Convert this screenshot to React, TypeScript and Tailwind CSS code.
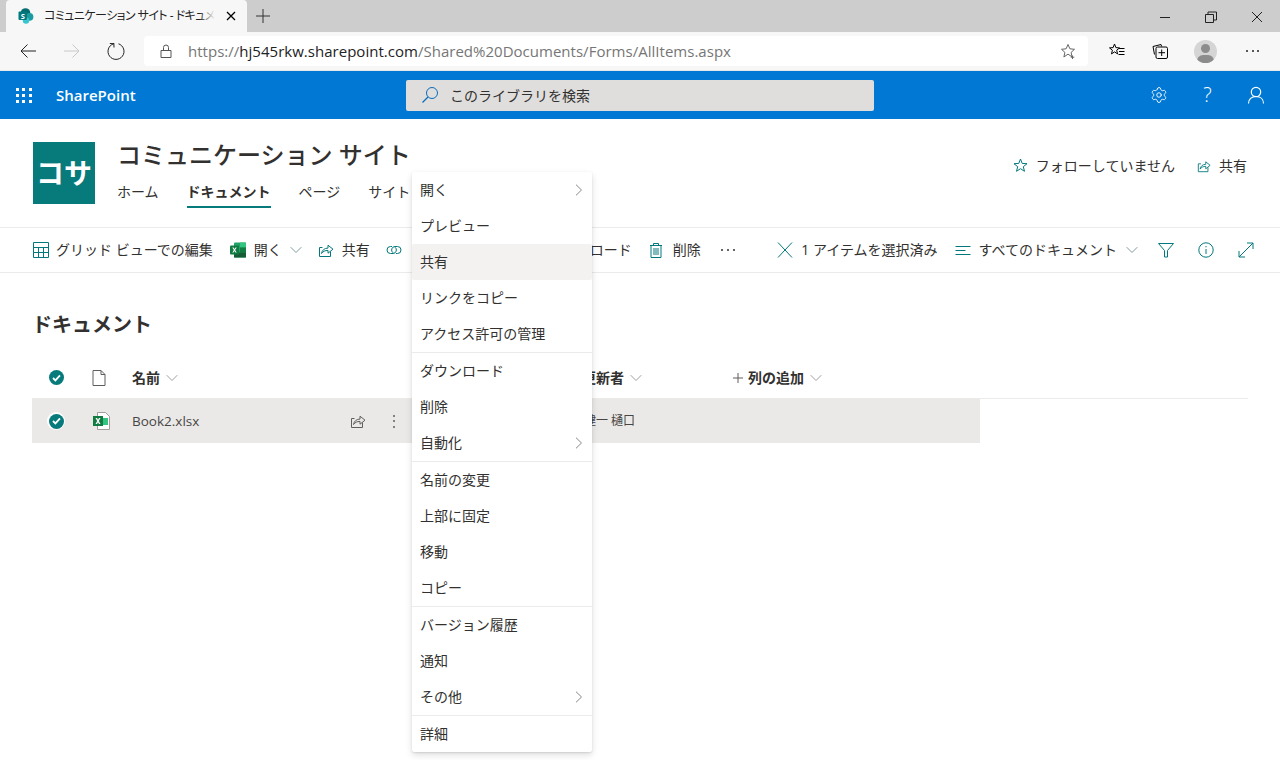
import React from "react";
import { Settings } from "lucide-react";

type IP = { size?: number; className?: string; children?: React.ReactNode; vb?: number };
const I = ({ size = 16, className = "", children, vb }: IP) => (
  <svg width={size} height={size} viewBox={`0 0 ${vb ?? size} ${vb ?? size}`} fill="none" stroke="currentColor" strokeWidth={1} className={`shrink-0 ${className}`}>
    {children}
  </svg>
);

const Chevron = ({ className = "text-[#8a8886]", w = 12 }: { className?: string; w?: number }) => (
  <svg width={w} height={8} viewBox="0 0 12 8" fill="none" stroke="currentColor" className={`shrink-0 ${className}`}><path d="M.7 1.2 6 6.500l5.300-5.300" /></svg>
);

const ShareIcon = ({ className = "text-[#03787c]", size = 16 }: { className?: string; size?: number }) => (
  <I size={size} vb={16} className={className}>
    <path d="M4.500 5.500H1.500v9h11V9.500M3.500 11.500c.6-3.400 3-5.400 6.500-5.400V3.200l5 4-5 4V8.400c-2.800 0-5 1-6.500 3.100Z" />
  </I>
);

const ExcelSmall = () => (
  <svg width={16} height={16} viewBox="0 0 16 16" className="shrink-0">
    <rect x="4" y="0.5" width="12" height="15" rx="1" fill="#21a366" />
    <rect x="10" y="0.5" width="6" height="5" fill="#33c481" />
    <rect x="10" y="5.5" width="6" height="5" fill="#107c41" />
    <rect x="4" y="10.5" width="12" height="5" fill="#185c37" />
    <rect x="0" y="3.5" width="9" height="9" rx="1" fill="#107c41" />
    <path d="M2.300 5.400h1.200l1 1.600 1-1.600h1.200L5.100 8l1.600 2.600H5.500l-1-1.700-1 1.700H2.300L3.900 8Z" fill="#fff" />
  </svg>
);

const CheckCircle = ({ halo }: { halo?: boolean }) => (
  <span className={`flex h-[18px] w-[18px] items-center justify-center rounded-full ${halo ? "bg-white" : ""}`}>
    <span className="flex h-[15px] w-[15px] items-center justify-center rounded-full bg-[#077a7c]">
      <svg width={9} height={8} viewBox="0 0 9 8" fill="none" stroke="#fff" strokeWidth={1.8}><path d="M1 4l2.400 2.400L8 1.400" /></svg>
    </span>
  </span>
);

const TbBtn = ({ icon, label, className = "" }: { icon: React.ReactNode; label: string; className?: string }) => (
  <div className={`flex items-center gap-2 ${className}`}>
    {icon}
    <span className="whitespace-nowrap pb-[2px]">{label}</span>
  </div>
);

const menu: { label: string; sub?: boolean; hl?: boolean }[][] = [
  [{ label: "開く", sub: true }, { label: "プレビュー" }, { label: "共有", hl: true }, { label: "リンクをコピー" }, { label: "アクセス許可の管理" }],
  [{ label: "ダウンロード" }, { label: "削除" }, { label: "自動化", sub: true }],
  [{ label: "名前の変更" }, { label: "上部に固定" }, { label: "移動" }, { label: "コピー" }],
  [{ label: "バージョン履歴" }, { label: "通知" }, { label: "その他", sub: true }],
  [{ label: "詳細" }],
];

export default function App() {
  return (
    <div className="relative h-[760px] w-[1280px] overflow-hidden bg-white font-['Open_Sans','Noto_Sans_CJK_JP',sans-serif] text-[14px] text-[#323130]">
      {/* tab strip */}
      <div className="flex h-8 items-end bg-[#cdcdcd] pl-[6px]">
        <div className="flex h-8 w-[241px] items-center rounded-t-[4px] bg-[#f7f7f7] pl-3 pr-[11px]">
          <svg width={16} height={16} viewBox="0 0 16 16" className="shrink-0">
            <circle cx="7.5" cy="5" r="4.8" fill="#036c70" />
            <circle cx="11.5" cy="8.8" r="3.9" fill="#1a9ba1" />
            <circle cx="8" cy="12.5" r="3.2" fill="#37c6d0" />
            <rect x="0.5" y="3.6" width="8.4" height="8.4" rx="1" fill="#03787c" />
            <text x="4.7" y="10.6" textAnchor="middle" fontSize="7.5" fontWeight="700" fill="#fff">S</text>
          </svg>
          <div className="relative ml-[10px] w-[171px] overflow-hidden whitespace-nowrap text-[12px] tracking-[-0.55px] text-[#222] [font-feature-settings:'palt']">
            コミュニケーション サイト - ドキュメント -
            <span className="absolute inset-y-0 right-0 w-4 bg-gradient-to-r from-transparent to-[#f7f7f7]" />
          </div>
          <I size={10} className="ml-auto text-black"><path d="M1 1l8 8M9 1l-8 8" strokeWidth={1.3} /></I>
        </div>
        <I size={14} className="mb-[9px] ml-[9px] text-[#333]"><path d="M7 0v14M0 7h14" /></I>
        <div className="mb-[9px] ml-auto flex items-center gap-[34px] pr-[17px] text-[#222]">
          <I size={12}><path d="M1 6.500h10" /></I>
          <I size={12}><path d="M.5 3.500h8v8h-8zM3 3.500V1h8.500v8H8.500" /></I>
          <I size={12}><path d="M1 1l10 10M11 1 1 11" /></I>
        </div>
      </div>

      {/* address row */}
      <div className="flex h-[39px] items-center border-b border-[#e8e8e8] bg-[#f7f7f7] pl-5">
        <I size={16} className="text-[#222]"><path d="M16 8H1M7.500 1.500 1 8l6.500 6.500" /></I>
        <I size={16} className="ml-7 text-[#c8c8c8]"><path d="M0 8h15M8.500 1.500 15 8l-6.500 6.500" /></I>
        <I size={18} vb={18} className="ml-[27px] text-[#222]"><path d="M6.500 1.800a8 8 0 1 0 5 0M6.800 1l.2 4.500M2.800 1.500 7 1.700" /></I>
        <div className="ml-[19px] flex h-[30px] w-[944px] items-center rounded-[4px] bg-white pl-[15px] pr-[12px]">
          <I size={14} className="text-[#555]"><path d="M2 6.500h10v7H2zM4.500 6.500V3.500a2.500 2.500 0 0 1 5 0v3" /></I>
          <span className="ml-[15px] whitespace-nowrap text-[15px] tracking-[0.02px] text-[#767676]">https://<span className="text-[#222]">hj545rkw.sharepoint.com</span>/Shared%20Documents/Forms/AllItems.aspx</span>
          <I size={16} className="ml-auto text-[#666]"><path d="M8 1.500l1.900 4.300 4.600.5-3.400 3.100 1 4.600L8 11.100l-4.100 2.900 1-4.600L1.500 6.300l4.600-.5Z" /><path d="M12.500 12.500v3.500M10.800 14.200h3.500" /></I>
        </div>
        <I size={18} vb={18} className="ml-5 text-black"><path d="M6.500 2l1.400 3.600 3.600.3-2.800 2.300.9 3.700-3.100-2-3 2 .9-3.700L1.500 5.900l3.600-.3Z" /><path d="M11 6.500h5.500M11 9.500h5.500M10.500 12.500h6" /></I>
        <I size={18} vb={18} className="ml-[25px] text-black"><path d="M3.500 12.500 2 4.500 10 2.500l.7 2" /><rect x="5" y="5" width="11.500" height="11.500" rx="1.500" /><path d="M10.700 7.500v6.500M7.500 10.700h6.500" /></I>
        <div className="relative ml-[25px] h-[23px] w-[23px] overflow-hidden rounded-full bg-[#d5d5d5]">
          <span className="absolute left-[7px] top-[4px] h-[9px] w-[9px] rounded-full bg-[#8c8c8c]" />
          <span className="absolute left-[3px] top-[15px] h-[12px] w-[17px] rounded-full bg-[#8c8c8c]" />
        </div>
        <div className="ml-[29px] flex gap-[3.500px]">
          <span className="h-[2px] w-[2px] rounded-full bg-[#222]" />
          <span className="h-[2px] w-[2px] rounded-full bg-[#222]" />
          <span className="h-[2px] w-[2px] rounded-full bg-[#222]" />
        </div>
      </div>

      {/* suite bar */}
      <div className="flex h-12 items-center bg-[#0078d4] pl-4 pr-[15px] text-white">
        <div className="grid w-4 grid-cols-3 gap-[3px]">
          {Array.from({ length: 9 }).map((_, i) => <span key={i} className="h-[3px] w-[3px] bg-white" />)}
        </div>
        <span className="ml-6 w-[350px] text-[15px] font-semibold">SharePoint</span>
        <div className="flex h-[31px] w-[468px] items-center rounded-[2px] bg-[#dfdedc] pl-[15px] text-[#323130]">
          <I size={18} vb={18} className="text-[#0a6cbd]"><circle cx="11" cy="7" r="5.500" /><path d="M7 11 1.500 16.500" strokeWidth={1.3} /></I>
          <span className="ml-[11px]">このライブラリを検索</span>
        </div>
        <div className="ml-auto flex items-center gap-[31px]">
          <Settings size={18} strokeWidth={1.2} className="shrink-0" />
          <span className="w-[17px] text-center text-[20px] font-light leading-none">?</span>
          <I size={18} vb={18}><circle cx="9" cy="6" r="4.700" strokeWidth={1.2} /><path d="M1.500 17.500c0-4.200 3-7 7.500-7s7.500 2.800 7.500 7" strokeWidth={1.2} /></I>
        </div>
      </div>

      {/* site header */}
      <div className="flex h-[109px] items-start border-b border-[#edebe9] pl-[33px] pr-[33px] pt-[23px]">
        <div className="flex h-[62px] w-[62px] items-center justify-center bg-[#077a7c] text-[28px] font-bold leading-none text-white">コサ</div>
        <div className="ml-[22px]">
          <div className="-mt-[1px] text-[24px] font-medium leading-[28px]">コミュニケーション サイト</div>
          <div className="mt-[12px] flex gap-7">
            <span>ホーム</span>
            <span className="border-b-2 border-[#077a7c] pb-[4px] font-bold">ドキュメント</span>
            <span>ページ</span>
            <span>サイト コンテンツ</span>
          </div>
        </div>
        <div className="ml-auto mt-[13px] flex items-center">
          <I size={15} className="text-[#03787c]"><path d="M7.500 1l1.700 4.400 4.800.3-3.700 3 1.200 4.600-4-2.600-4 2.600 1.200-4.600-3.700-3 4.800-.3Z" /></I>
          <span className="ml-2">フォローしていません</span>
          <ShareIcon size={14} className="ml-[22px] text-[#03787c]" />
          <span className="ml-2">共有</span>
        </div>
      </div>

      {/* command bar */}
      <div className="flex h-[45px] items-center border-b border-[#edebe9] pl-[33px] pr-[26px]">
        <div className="flex items-center gap-[7px]">
          <I size={16} className="text-[#03787c]"><path d="M.5.500h15v15H.5zM.5 5.500h15M.5 10.500h15M5.500 5.500v10M10.500 5.500v10" /></I>
          <span className="whitespace-nowrap pb-[2px]">グリッド ビューでの編集</span>
        </div>
        <TbBtn className="ml-[17px]" label="開く" icon={<ExcelSmall />} />
        <Chevron className="ml-2 text-[#7f9a9c]" />
        <TbBtn className="ml-4" label="共有" icon={<ShareIcon />} />
        <TbBtn className="ml-4" label="リンクをコピー" icon={<I size={16} className="text-[#03787c]"><path d="M6 4.500H4.500a3.500 3.500 0 0 0 0 7H7a3.500 3.500 0 0 0 2-6.300" /><path d="M10 11.500h1.500a3.500 3.500 0 0 0 0-7H9a3.500 3.500 0 0 0-2 6.300" /></I>} />
        <TbBtn className="ml-4" label="ダウンロード" icon={<I size={16} className="text-[#03787c]"><path d="M8 1v11M3.500 8 8 12.500 12.500 8M2 15h12" /></I>} />
        <TbBtn className="ml-4 gap-[9px]" label="削除" icon={<I size={16} className="text-[#03787c]"><path d="M2 3.500h12M5.500 3.500V1.500h5v2M3 3.500v12h10v-12M6 6v7M8 6v7M10 6v7" /></I>} />
        <div className="ml-5 flex gap-[4px]">
          <span className="h-[2px] w-[2px] rounded-full bg-[#323130]" />
          <span className="h-[2px] w-[2px] rounded-full bg-[#323130]" />
          <span className="h-[2px] w-[2px] rounded-full bg-[#323130]" />
        </div>
        <I size={16} className="ml-auto text-[#03787c]"><path d="M1 .500l14 15M15 .500l-14 15" /></I>
        <span className="ml-[8px] whitespace-nowrap pb-[2px]">1 アイテムを選択済み</span>
        <I size={16} className="ml-[17px] text-[#03787c]"><path d="M.5 4.500h15M.5 8.500h10M.5 12.500h15" /></I>
        <span className="ml-[8px] whitespace-nowrap pb-[2px]">すべてのドキュメント</span>
        <Chevron className="ml-[9px] text-[#7f9a9c]" />
        <I size={16} className="ml-[20px] text-[#03787c]"><path d="M.5 1.500h15L9.500 8.500v6.500h-3V8.500Z" /></I>
        <I size={16} className="ml-[24px] text-[#03787c]"><circle cx="8" cy="8" r="7.200" /><path d="M8 7v5M8 4v1.300" /></I>
        <I size={16} className="ml-[24px] text-[#03787c]"><path d="M1 15 15 1M9 1h6v6M1 9v6h6" /></I>
      </div>

      {/* content */}
      <div className="pl-[32px] pr-[32px] pt-[37px]">
        <h1 className="text-[20px] font-bold leading-[30px]">ドキュメント</h1>
        <div className="mt-[17px] flex h-[42px] items-center border-b border-[#edebe9] font-bold">
          <span className="ml-[15px]"><CheckCircle /></span>
          <I size={16} className="ml-[26px] text-[#605e5c]"><path d="M2 .500h8l4 4v11H2zM10 .500v4h4" /></I>
          <span className="ml-[25px]">名前</span>
          <Chevron className="ml-[6px] text-[#a19f9d]" />
          <span className="ml-[404px]">更新者</span>
          <Chevron className="ml-[6px] text-[#a19f9d]" />
          <I size={10} className="ml-[91px] text-[#605e5c]"><path d="M5 0v10M0 5h10" /></I>
          <span className="ml-[5px]">列の追加</span>
          <Chevron className="ml-[6px] text-[#a19f9d]" />
        </div>
        <div className="flex h-[44px] w-[948px] items-center bg-[#ebe9e7] text-[#484644]">
          <span className="ml-[15px]"><CheckCircle halo /></span>
          <svg width={18} height={18} viewBox="0 0 18 18" className="ml-[28px] shrink-0">
            <path d="M4.500.500h8l4 4v13h-12z" fill="#fff" stroke="#a19f9d" />
            <rect x="10" y="6" width="5" height="7" fill="#33c481" />
            <rect x="0" y="4" width="10" height="10" fill="#107c41" />
            <path d="M2.500 6h1.500l1 1.800L6 6h1.500L5.800 9l1.700 3H6l-1-1.800L4 12H2.500l1.700-3Z" fill="#fff" />
          </svg>
          <span className="ml-[21px] w-[218px] text-[13.5px]">Book2.xlsx</span>
          <ShareIcon className="text-[#605e5c]" />
          <div className="ml-[27px] flex flex-col gap-[3.500px]">
            <span className="h-[2px] w-[2px] rounded-full bg-[#605e5c]" />
            <span className="h-[2px] w-[2px] rounded-full bg-[#605e5c]" />
            <span className="h-[2px] w-[2px] rounded-full bg-[#605e5c]" />
          </div>
          <span className="ml-[189px] text-[12px]">健一 樋口</span>
        </div>
      </div>

      {/* context menu */}
      <div className="absolute left-[412px] top-[172px] w-[180px] rounded-[2px] bg-white shadow-[0_3px_7px_rgba(0,0,0,0.13),0_1px_2px_rgba(0,0,0,0.1)]">
        {menu.map((group, gi) => (
          <div key={gi} className={gi > 0 ? "border-t border-[#edebe9]" : ""}>
            {group.map((it) => (
              <div key={it.label} className={`flex h-9 items-center justify-between rounded-[2px] pl-2 pr-[9px] ${it.hl ? "bg-[#f3f2f1]" : ""}`}>
                <span className="pb-[2px]">{it.label}</span>
                {it.sub && <svg width={8} height={12} viewBox="0 0 8 12" fill="none" stroke="#8a8886" className="shrink-0"><path d="M1 .7 6.500 6 1 11.300" /></svg>}
              </div>
            ))}
          </div>
        ))}
      </div>
    </div>
  );
}
